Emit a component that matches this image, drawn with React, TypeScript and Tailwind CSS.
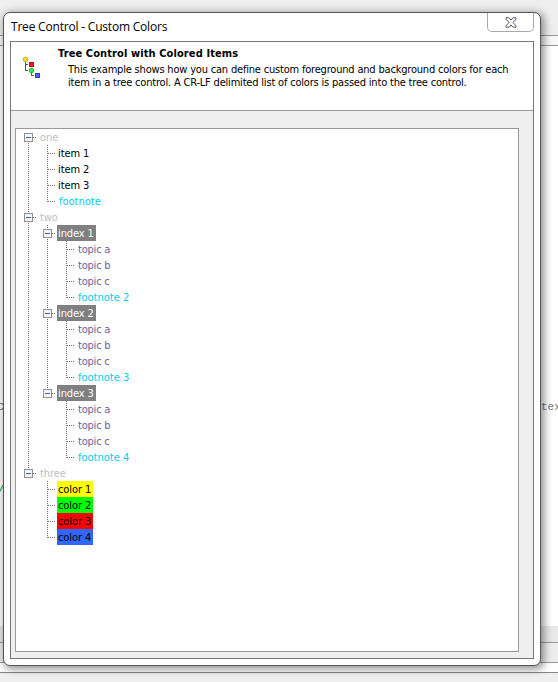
import React from "react";

type Tone = "root" | "plain" | "note" | "index" | "topic" | "yellow" | "green" | "red" | "blue";

interface Node {
  label: string;
  tone: Tone;
  children?: Node[];
}

const tones: Record<Tone, string> = {
  root: "pl-[2px] text-[#c0c0c0]",
  plain: "pl-px text-black",
  note: "pl-[2px] text-[#00cfee] tracking-[0px]",
  index: "pl-px bg-[#808080] text-white w-[39px]",
  topic: "pl-[2px] text-[#666699] tracking-[-0.2px]",
  yellow: "pl-px bg-[#ffff00] text-black w-9",
  green: "pl-px bg-[#00ff00] text-black w-9",
  red: "pl-px bg-[#ff0000] text-black w-9",
  blue: "pl-px bg-[#3366ff] text-black w-9",
};

const index = (n: number): Node => ({
  label: `index ${n}`,
  tone: "index",
  children: [
    { label: "topic a", tone: "topic" },
    { label: "topic b", tone: "topic" },
    { label: "topic c", tone: "topic" },
    { label: `footnote ${n + 1}`, tone: "note" },
  ],
});

const tree: Node[] = [
  {
    label: "one",
    tone: "root",
    children: [
      { label: "item 1", tone: "plain" },
      { label: "item 2", tone: "plain" },
      { label: "item 3", tone: "plain" },
      { label: "footnote", tone: "note" },
    ],
  },
  { label: "two", tone: "root", children: [index(1), index(2), index(3)] },
  {
    label: "three",
    tone: "root",
    children: [
      { label: "color 1", tone: "yellow" },
      { label: "color 2", tone: "green" },
      { label: "color 3", tone: "red" },
      { label: "color 4", tone: "blue" },
    ],
  },
];

function Guide({ up, down, across, box }: { up?: boolean; down?: boolean; across?: boolean; box?: boolean }) {
  return (
    <svg width="19" height="16" viewBox="0 0 19 16" className="block shrink-0" shapeRendering="crispEdges">
      <g stroke="#6c6c6c" strokeDasharray="1 1">
        {up && <path d="M9.5 0V9" />}
        {down && <path d="M9.5 8V16" />}
        {across && <path d="M10 8.5H18" />}
      </g>
      {box && (
        <>
          <rect x="5.5" y="4.5" width="8" height="8" fill="#f4f4f4" stroke="#919191" />
          <path d="M7 8.5H12" stroke="#4b63a7" />
        </>
      )}
    </svg>
  );
}

function Branch({ nodes, trail = [] }: { nodes: Node[]; trail?: boolean[] }) {
  return (
    <>
      {nodes.map((node, i) => {
        const last = i === nodes.length - 1;
        return (
          <React.Fragment key={node.label}>
            <div className="flex h-4">
              {trail.map((open, k) => (
                <Guide key={k} up={open} down={open} />
              ))}
              <Guide up={trail.length > 0 || i > 0} down={!last} across box={!!node.children} />
              <span className={`block h-4 whitespace-pre pt-px text-[11px] leading-[15px] ${tones[node.tone]}`}>
                {node.label}
              </span>
            </div>
            {node.children && <Branch nodes={node.children} trail={[...trail, !last]} />}
          </React.Fragment>
        );
      })}
    </>
  );
}

function Backdrop() {
  return (
    <div className="flex h-full flex-col bg-[#efefef]">
      <div className="h-[35px] shrink-0" />
      <div className="h-[11px] shrink-0 border-y border-[#999] bg-[#f8f8f8]" />
      <div className="flex h-[580px] shrink-0 flex-col bg-white font-['Liberation_Mono',monospace] text-[12px] leading-4">
        <div className="mt-[353px] flex justify-between text-[#777]">
          <span className="-ml-[3px]">c</span>
          <span className="w-[17px] whitespace-nowrap text-[11px]">tex</span>
        </div>
        <div className="-ml-[3px] mt-[68px] text-[#00a040]">/</div>
      </div>
      <div className="h-[17px] shrink-0 border-b border-[#999] bg-[#e9e9e9]" />
      <div className="h-5 shrink-0 border-b border-[#999] bg-[#eee]" />
      <div className="h-[10px] shrink-0 border-b border-[#888] bg-white" />
    </div>
  );
}

function TreeIcon() {
  return (
    <svg width="20" height="22" viewBox="0 0 20 22" className="block">
      <path d="M3.5 6V14.5H6M3.5 8.5H6M9.5 16V19.5H12" fill="none" stroke="#555" shapeRendering="crispEdges" />
      <circle cx="3.5" cy="3.5" r="2.4" fill="#ffdc20" stroke="#b69422" strokeWidth=".7" />
      <rect x="7.5" y="6.5" width="4" height="4" fill="#ed1c24" stroke="#a51b20" />
      <circle cx="9.5" cy="14.5" r="2.4" fill="#22ef48" stroke="#249a38" strokeWidth=".7" />
      <rect x="13.5" y="17.5" width="4" height="4" fill="#5269ff" stroke="#3038be" />
    </svg>
  );
}

export default function App() {
  return (
    <div className="relative h-[682px] w-[558px] overflow-hidden">
      <Backdrop />
      <div className="absolute left-[3px] top-[12px] flex h-[654px] w-[538px] flex-col rounded-[7px] border border-[#555] bg-white px-[6px] pb-[6px] font-['DejaVu_Sans_Condensed','DejaVu_Sans',sans-serif] [font-stretch:condensed] shadow-[2px_2px_8px_1px_rgba(0,0,0,0.45)]">
        <div className="flex h-7 shrink-0 justify-between">
          <h1 className="whitespace-nowrap pl-px pt-[5px] font-['Open_Sans',sans-serif] text-[12px] font-normal leading-[18px] tracking-[-0.2px] [font-stretch:normal]">
            Tree Control - Custom Colors
          </h1>
          <button className="flex h-[19px] w-[47px] items-center justify-center rounded-b-[5px] border border-t-0 border-[#aaa]" aria-label="Close">
            <svg width="12" height="11" viewBox="0 0 12 11">
              <path d="M1 .8H4.1L6 3.1 7.9.8H11V2.1L8 5.5 11 8.9V10.2H7.9L6 7.9 4.1 10.2H1V8.9L4 5.5 1 2.1Z" fill="#fff" stroke="#555b6c" strokeWidth="1" />
            </svg>
          </button>
        </div>
        <div className="flex min-h-0 flex-1 flex-col border border-[#777] bg-[#efefef]">
          <header className="flex h-[69px] shrink-0 border-b border-[#999] bg-white">
            <div className="w-[47px] shrink-0 pl-[11px] pt-[14px]">
              <TreeIcon />
            </div>
            <div className="whitespace-nowrap pt-[5px] text-[11px] leading-[13px] text-black">
              <h2 className="font-bold leading-[14px] tracking-[0.1px]">Tree Control with Colored Items</h2>
              <p className="pl-[10px] pt-[2px] tracking-[-0.19px]">
                <span className="block">This example shows how you can define custom foreground and background colors for each</span>
                <span className="block">item in a tree control. A CR-LF delimited list of colors is passed into the tree control.</span>
              </p>
            </div>
          </header>
          <div className="mb-[6px] ml-[4px] mr-[14px] mt-[17px] flex-1 border border-[#999] bg-white pl-[3px] tracking-[-0.1px]">
            <Branch nodes={tree} />
          </div>
        </div>
      </div>
    </div>
  );
}
